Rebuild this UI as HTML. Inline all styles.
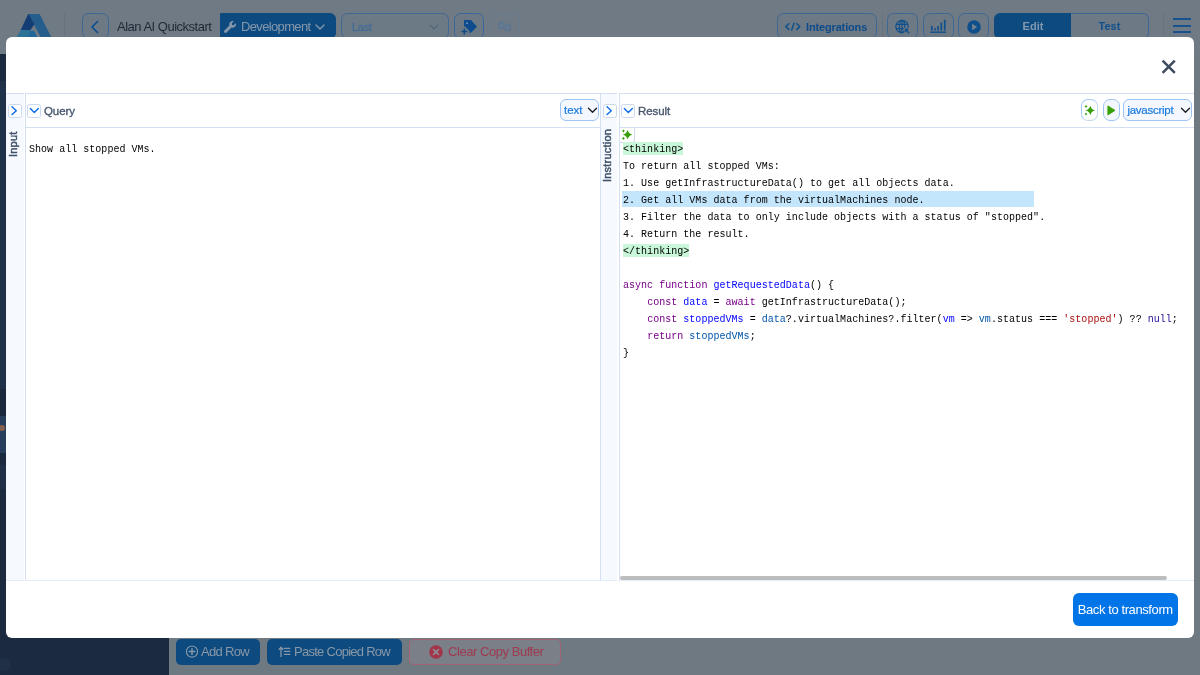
<!DOCTYPE html>
<html lang="en">
<head>
<meta charset="utf-8">
<title>Alan AI Quickstart</title>
<style>
*{box-sizing:border-box;margin:0;padding:0}
html,body{width:1200px;height:675px;overflow:hidden}
body{position:relative;font-family:"Liberation Sans",sans-serif;background:#6e7982;color:#3e4b5c}
.abs{position:absolute}
#modal,#topbar,.bb{will-change:transform}
/* ---------- dimmed background app ---------- */
#topbar{left:0;top:0;width:1200px;height:54px;background:#707a84}
#sidebar{left:0;top:54px;width:169px;height:621px;background:#1b2b40}
#sidebar .band{left:0;width:169px;background:#223349}
#main{left:169px;top:54px;width:1031px;height:621px;background:#6f7982}
.tb{position:absolute;top:13px;height:26px;border:1px solid #3d6896;border-radius:6.500px;background:#6d7a85;color:#0f4f8c;font-size:12px;line-height:24px;white-space:nowrap}
.tb.solid{background:#0c4a80;border-color:#0c4a80;color:#8b9fb3}
.bb{position:absolute;top:639px;height:26px;border-radius:5px;background:#0c4a80;color:#8a97a5;font-size:13px;line-height:26px;white-space:nowrap}
/* ---------- modal ---------- */
#modal{left:6px;top:37px;width:1188px;height:601px;background:#fff;border-radius:6px;overflow:hidden}
.hl{background:#d3e0f3}
.vtext{position:absolute;transform-origin:0 0;transform:rotate(-90deg);font-size:11px;letter-spacing:0.22px;font-weight:normal;-webkit-text-stroke:0.45px #3f5169;color:#3f5169;white-space:nowrap;line-height:14px}
.sq{position:absolute;width:14px;height:14px;border:1px solid #cbd9ef;border-radius:2.5px;background:#fdfeff}
.ptitle{position:absolute;font-size:11.5px;letter-spacing:-0.1px;-webkit-text-stroke:0.35px #46566c;color:#4a5a70;line-height:14px}
.sel{position:absolute;height:22px;border:1px solid #9cc5f5;border-radius:6px;background:#f4f8fe;color:#1a7be0;-webkit-text-stroke:0.200px #1a7be0;font-size:11.5px;line-height:21px;white-space:nowrap}
pre{position:absolute;font-family:"Liberation Mono","DejaVu Sans Mono",monospace;font-size:10px;line-height:17px;color:#000;white-space:pre;letter-spacing:0.03px}
.k{color:#708}.d{color:#00f}.v2{color:#05a}.s{color:#a11}.a{color:#219}
.tg{background:#c9f7d9;padding:1.800px 0 0.200px}
</style>
</head>
<body>

<div id="topbar" class="abs">
  <svg class="abs" style="left:10px;top:8px" width="50" height="32" viewBox="10 8 50 32">
    <polygon points="28.300,13.900 39.600,13.900 52.700,40 42.300,40" fill="#255d8c"/>
    <polygon points="28.200,13.900 28.500,13.900 34.400,24.200 30.400,30.100 20.700,30.100" fill="#143d74"/>
    <polygon points="20.700,30.100 30.600,30.100 26,40 15.400,40" fill="#2b7396"/>
    <polygon points="30.600,30.100 30.900,30.700 34.200,30.700 38.800,40 26,40" fill="#20699a"/>
  </svg>
  <div class="abs" style="left:64px;top:13px;width:1px;height:27px;background:#66727e"></div>
  <div class="tb" style="left:82px;width:27px">
    <svg class="abs" style="left:5.800px;top:5.500px" width="12" height="14" viewBox="0 0 12 14"><path d="M8.5 1.500 L3 7 L8.5 12.500" fill="none" stroke="#0c4c90" stroke-width="1.700" stroke-linecap="round" stroke-linejoin="round"/></svg>
  </div>
  <div class="abs" style="left:117px;top:17.800px;font-size:13px;line-height:18px;color:#1f2935;white-space:nowrap;letter-spacing:-0.5px">Alan AI Quickstart</div>
  <div class="tb solid" style="left:220px;width:116px;border-radius:1px 6px 6px 1px">
    <svg class="abs" style="left:3px;top:7px" width="12" height="12" viewBox="0 0 512 512"><path fill="#8497aa" d="M507.7 109.1c-2.200-9-13.500-12.100-20.100-5.500l-74.400 74.400-67.900-11.300-11.300-67.900 74.400-74.400c6.600-6.600 3.400-17.900-5.700-20.200-47.400-11.700-99.600.9-136.600 37.900-39.600 39.600-50.600 97.100-34.100 147.200L18.700 402.800c-25 25-25 65.500 0 90.500s65.500 25 90.500 0l213.200-213.200c50.100 16.700 107.500 5.700 147.400-34.200 37.100-37.100 49.700-89.300 37.900-136.800z"/></svg>
    <span class="abs" style="left:20px;top:0.5px;font-size:13px;color:#8598ab;letter-spacing:-0.65px">Development</span>
    <svg class="abs" style="left:94px;top:10px" width="10" height="6" viewBox="0 0 10 6"><path d="M1 1 L5 5 L9 1" fill="none" stroke="#8598ab" stroke-width="1.4" stroke-linecap="round" stroke-linejoin="round"/></svg>
  </div>
  <div class="tb" style="left:341px;width:108px;border-color:#3f6894;background:#6c7a85">
    <span class="abs" style="left:10px;top:0.800px;font-size:11px;color:#436b96;-webkit-text-stroke:0.300px #436b96;letter-spacing:-0.35px">Last</span>
    <svg class="abs" style="left:86.500px;top:10px" width="10" height="6" viewBox="0 0 10 6"><path d="M1 1 L5 5 L9 1" fill="none" stroke="#55677a" stroke-width="1.1" stroke-linecap="round" stroke-linejoin="round"/></svg>
  </div>
  <div class="tb" style="left:454px;width:30px;border-color:#3a679b">
    <svg class="abs" style="left:5px;top:5px" width="20" height="17" viewBox="460 19 20 17"><path d="M464 20 H471 L477 26.700 L471 32.700 H469.300 V30.300 H467.700 V28.200 H465.800 V26.500 H464 Z" fill="#0d4b8c"/><rect x="466.300" y="22.500" width="1.500" height="1.500" fill="#8da1b6"/><path d="M464.300 28.600 v5.800 M461.400 31.500 h5.800" stroke="#0d4b8c" stroke-width="1.400" fill="none"/></svg>
  </div>
  <div class="tb" style="left:490px;width:30px;border-color:#6a7e92;background:#6f7a84">
    <svg class="abs" style="left:6px;top:7px" width="16" height="12" viewBox="497 21 16 12"><rect x="498" y="21.700" width="7" height="7" rx="0.800" fill="#5d7691"/><rect x="504.300" y="24" width="6.800" height="7.300" rx="0.800" fill="#5d7691" stroke="#707a84" stroke-width="0.600"/><path d="M501.500 23.800 v2.800 M500.100 25.200 h2.800 M507.700 26.200 v2.800 M506.300 27.600 h2.800" stroke="#75818d" stroke-width="0.900"/></svg>
  </div>
  <div class="tb" style="left:777px;width:100px;border-color:#3d6896">
    <svg class="abs" style="left:6px;top:8px" width="17" height="10" viewBox="784 22 17 10"><path d="M788.800 23.800 L785.800 26.600 L788.800 29.400 M796.800 23.800 L799.800 26.600 L796.800 29.400 M794 23.200 L791.700 30" fill="none" stroke="#0f4f8c" stroke-width="1.500" stroke-linecap="round" stroke-linejoin="round"/></svg>
    <span class="abs" style="left:28px;top:0.500px;font-size:11px;font-weight:bold;color:#0d4a8a;letter-spacing:-0.15px">Integrations</span>
  </div>
  <div class="abs" style="left:882px;top:13px;width:1px;height:27px;background:#66727e"></div>
  <div class="tb" style="left:887px;width:31px;border-color:#3d6896">
    <svg class="abs" style="left:6px;top:4px" width="18" height="17" viewBox="894 18 18 17"><g fill="none" stroke="#0f4f8c" stroke-width="1.200"><circle cx="902" cy="26.500" r="6.200"/><ellipse cx="902" cy="26.500" rx="2.700" ry="6.200"/><path d="M896 24.300 h12 M896 28.700 h12 M902 20.300 v12.400"/></g><rect x="903.800" y="27.800" width="6.500" height="6.500" fill="#6f7a84"/><path d="M905.300 29.300 h3 M905.300 29.300 v3 M905.600 29.600 l3.600 3.600" stroke="#0f4f8c" stroke-width="1.400" fill="none"/></svg>
  </div>
  <div class="tb" style="left:923px;width:31px;border-color:#3d6896">
    <svg class="abs" style="left:4px;top:4px" width="20" height="17" viewBox="928 18 20 17"><g fill="#0f4f8c"><rect x="931" y="26" width="1.700" height="4.500"/><rect x="934.300" y="28" width="1.500" height="2.500"/><rect x="937.200" y="26" width="1.600" height="4.500"/><rect x="940.500" y="22.500" width="1.600" height="8"/><rect x="943.900" y="19.800" width="1.700" height="10.700"/><rect x="930.200" y="31.500" width="15.800" height="1.400"/></g></svg>
  </div>
  <div class="tb" style="left:958px;width:31px;border-color:#3d6896">
    <svg class="abs" style="left:6.500px;top:4.500px" width="16" height="16" viewBox="965.500 18.500 16 16"><circle cx="973.500" cy="26.500" r="6.800" fill="#0f4f8c"/><path d="M971.600 23.300 L976.700 26.500 L971.600 29.700 z" fill="#76828e"/></svg>
  </div>
  <div class="tb solid" style="left:994px;width:78px;border-radius:6px 0 0 6px;text-align:center;font-weight:bold;font-size:11px;line-height:25.600px;color:#8399b0">Edit</div>
  <div class="tb" style="left:1071px;width:78px;border-radius:0 6px 6px 0;text-align:center;font-weight:bold;font-size:11px;line-height:25.600px;border-color:#3d6896;border-left:none">Test</div>
  <div class="abs" style="left:1163px;top:13px;width:1px;height:27px;background:#66727e"></div>
  <div class="abs" style="left:1173px;top:18px;width:18px;height:2px;background:#17528f"></div>
  <div class="abs" style="left:1173px;top:25px;width:18px;height:2px;background:#17528f"></div>
  <div class="abs" style="left:1173px;top:31px;width:18px;height:2px;background:#17528f"></div>
</div>
<div id="sidebar" class="abs">
  <div class="abs" style="left:0;top:0;width:169px;height:27px;background:#1b2a3f"></div>
  <div class="abs" style="left:0;top:27px;width:169px;height:308px;background:#20324a"></div>
  <div class="abs" style="left:0;top:335px;width:169px;height:27px;background:#1a293d"></div>
  <div class="abs" style="left:0;top:362px;width:169px;height:37px;background:#263e5b"></div>
  <div class="abs" style="left:-1px;top:371px;width:6px;height:6px;border-radius:50%;background:#84604f"></div>
  <div class="abs" style="left:0;top:399px;width:169px;height:222px;background:#1b2a3f"></div>
  <div class="abs" style="left:0;top:411px;width:169px;height:24px;background:#1e2f46"></div>
  <div class="abs" style="left:-2px;top:604px;width:13px;height:13px;border-radius:50%;background:#1f3047"></div>
</div>
<div id="main" class="abs"></div>
<div class="bb" style="left:176px;width:84px">
  <svg class="abs" style="left:9px;top:5px" width="15" height="15" viewBox="185 644 15 15"><circle cx="192" cy="651.600" r="5.600" fill="none" stroke="#8596a8" stroke-width="1.200"/><path d="M192 648.200 v6.800 M188.600 651.600 h6.800" stroke="#8596a8" stroke-width="1.500" fill="none"/></svg>
  <span class="abs" style="left:25px;top:-0.400px;letter-spacing:-0.7px">Add Row</span>
</div>
<div class="bb" style="left:267px;width:135px">
  <svg class="abs" style="left:11px;top:7px" width="14" height="12" viewBox="0 0 14 12"><path d="M3 11 V1.500 M0.800 3.800 L3 1.300 L5.200 3.800 M5.800 2.300 h6.500 M5.800 5.300 h6.500 M5.800 8.300 h6.500" stroke="#8596a8" stroke-width="1.300" fill="none"/></svg>
  <span class="abs" style="left:27px;top:-0.400px;letter-spacing:-0.73px">Paste Copied Row</span>
</div>
<div class="bb" style="left:408.500px;width:152px;background:#7a7f88;border:1px solid #a26575;color:#a03a50;line-height:24px">
  <svg class="abs" style="left:19px;top:5px" width="14" height="14" viewBox="0 0 14 14"><circle cx="7" cy="7" r="6.800" fill="#a3344a"/><path d="M4.600 4.600 l4.800 4.800 M9.400 4.600 l-4.800 4.800" stroke="#8a8f98" stroke-width="1.600" fill="none" stroke-linecap="round"/></svg>
  <span class="abs" style="left:38px;top:-0.400px;letter-spacing:-0.45px">Clear Copy Buffer</span>
</div>

<!-- modal -->
<div id="modal" class="abs">
  <!-- close -->
  <svg class="abs" style="left:1154px;top:21px" width="18" height="18" viewBox="1160 58 18 18"><path d="M1162.600 60.700 L1174.800 72.900 M1174.800 60.700 L1162.600 72.900" stroke="#3d4b5e" stroke-width="2.500" fill="none"/></svg>

  <!-- Input column -->
  <div class="abs" style="left:0;top:56px;width:18px;height:488px;background:#f6f9fe;border-top:1px solid #d3e0f3;border-bottom:1px solid #e3ebf7"></div>
  <div class="sq" style="left:2.300px;top:67px"><svg class="abs" style="left:-1px;top:-1px" width="14" height="14" viewBox="0 0 14 14"><path d="M4 2.800 L8.300 6.700 L4 10.600" fill="none" stroke="#0b6ce6" stroke-width="1.400" stroke-linecap="round" stroke-linejoin="round"/></svg></div>
  <div class="vtext" style="left:0px;top:120px">Input</div>

  <!-- Query panel -->
  <div class="abs" style="left:18.500px;top:56px;width:577.500px;height:488px;border:1px solid #d3e0f3;border-right:none;border-bottom-color:#e3ebf7"></div>
  <div class="abs" style="left:19px;top:90px;width:576px;height:1px;background:#d3e0f3"></div>
  <div class="sq" style="left:21px;top:67px"><svg class="abs" style="left:-1px;top:-1px" width="14" height="14" viewBox="0 0 14 14"><path d="M3.300 4.400 L7.300 8.400 L11.300 4.400" fill="none" stroke="#0b6ce6" stroke-width="1.400" stroke-linecap="round" stroke-linejoin="round"/></svg></div>
  <div class="ptitle" style="left:38px;top:66.500px">Query</div>
  <div class="sel" style="left:554px;top:62px;width:39px"><span class="abs" style="left:3px;top:0">text</span>
    <svg class="abs" style="left:26px;top:7px" width="11" height="7" viewBox="0 0 11 7"><path d="M1.500 1.300 L5.500 5.200 L9.500 1.300" fill="none" stroke="#1b1f24" stroke-width="1.400" stroke-linecap="round" stroke-linejoin="round"/></svg></div>
  <pre style="left:23px;top:104px">Show all stopped VMs.</pre>

  <!-- Instruction column -->
  <div class="abs" style="left:594px;top:56px;width:17px;height:488px;background:#f6f9fe;border-top:1px solid #d3e0f3;border-left:1px solid #d3e0f3;border-bottom:1px solid #e3ebf7"></div>
  <div class="sq" style="left:597px;top:67px"><svg class="abs" style="left:-1px;top:-1px" width="14" height="14" viewBox="0 0 14 14"><path d="M4 2.800 L8.300 6.700 L4 10.600" fill="none" stroke="#0b6ce6" stroke-width="1.400" stroke-linecap="round" stroke-linejoin="round"/></svg></div>
  <div class="vtext" style="left:594px;top:145px">Instruction</div>

  <!-- Result panel -->
  <div class="abs" style="left:613px;top:56px;width:575px;height:488px;border:1px solid #d3e0f3;border-right:none;border-bottom-color:#e3ebf7"></div>
  <div class="abs" style="left:613px;top:90px;width:575px;height:1px;background:#d3e0f3"></div>
  <div class="sq" style="left:615px;top:67px"><svg class="abs" style="left:-1px;top:-1px" width="14" height="14" viewBox="0 0 14 14"><path d="M3.300 4.400 L7.300 8.400 L11.300 4.400" fill="none" stroke="#0b6ce6" stroke-width="1.400" stroke-linecap="round" stroke-linejoin="round"/></svg></div>
  <div class="ptitle" style="left:632px;top:66.500px">Result</div>
  <div class="sel" style="left:1075.200px;top:62px;width:17.300px;background:#fff;border-color:#a6ccf6 #c9d9ec #c9d9ec #a6ccf6;border-radius:7px"><svg class="abs" style="left:-1px;top:-1px" width="18" height="22" viewBox="1081.200 99 18 22"><path fill="#37a008" d="M1090.5 105.6 Q1091.3 109.6 1095.3 110.4 Q1091.3 111.2 1090.5 115.2 Q1089.7 111.2 1085.7 110.4 Q1089.7 109.6 1090.5 105.6Z M1086.2 104.65 Q1086.55 106.05 1087.95 106.4 Q1086.55 106.75 1086.2 108.15 Q1085.85 106.75 1084.45 106.4 Q1085.85 106.05 1086.2 104.65Z M1086.2 112.4 Q1086.55 113.75 1087.9 114.1 Q1086.55 114.45 1086.2 115.8 Q1085.85 114.45 1084.5 114.1 Q1085.85 113.75 1086.2 112.4Z"/></svg></div>
  <div class="sel" style="left:1097px;top:62px;width:17px;border-radius:7px"><svg class="abs" style="left:-1px;top:-1px" width="17" height="22" viewBox="1103 99 17 22"><path d="M1107.900 105.900 L1115 110.400 L1107.900 114.900 Z" fill="#37a008" stroke="#37a008" stroke-width="0.900" stroke-linejoin="round"/></svg></div>
  <div class="sel" style="left:1117px;top:62px;width:69px"><span class="abs" style="left:3.400px;top:0;letter-spacing:-0.26px">javascript</span>
    <svg class="abs" style="left:56px;top:7px" width="11" height="7" viewBox="0 0 11 7"><path d="M1.500 1.300 L5.500 5.200 L9.500 1.300" fill="none" stroke="#1b1f24" stroke-width="1.400" stroke-linecap="round" stroke-linejoin="round"/></svg></div>

  <!-- sparkle gutter widget -->
  <div class="abs" style="left:614px;top:91px;width:15px;height:14.500px;border-right:1px solid #cfdcf0;border-bottom:1px solid #cfdcf0;border-radius:0 0 3px 0;background:#fff"><svg class="abs" style="left:0;top:0" width="14" height="14" viewBox="620 128 14 14"><path fill="#37a008" d="M627.6 129.8 Q628.4 133.9 632.5 134.7 Q628.4 135.5 627.6 139.6 Q626.8 135.5 622.7 134.7 Q626.8 133.9 627.6 129.8Z M623.4 129.15 Q623.75 130.55 625.15 130.9 Q623.75 131.25 623.4 132.65 Q623.05 131.25 621.65 130.9 Q623.05 130.55 623.4 129.15Z M623.4 136.7 Q623.75 138.05 625.1 138.4 Q623.75 138.75 623.4 140.1 Q623.05 138.75 621.7 138.4 Q623.05 138.05 623.4 136.7Z"/></svg>
  </div>

  <!-- code -->
  <div class="abs" style="left:616px;top:154px;width:412px;height:16px;background:#c4e6fd"></div>
  <pre style="left:617px;top:104px"><span class="tg">&lt;thinking&gt;</span>
To return all stopped VMs:
1. Use getInfrastructureData() to get all objects data.
2. Get all VMs data from the virtualMachines node.
3. Filter the data to only include objects with a status of "stopped".
4. Return the result.
<span class="tg">&lt;/thinking&gt;</span>

<span class="k">async</span> <span class="k">function</span> <span class="d">getRequestedData</span>() {
    <span class="k">const</span> <span class="d">data</span> = <span class="k">await</span> getInfrastructureData();
    <span class="k">const</span> <span class="d">stoppedVMs</span> = <span class="v2">data</span>?.virtualMachines?.filter(<span class="d">vm</span> =&gt; <span class="v2">vm</span>.status === <span class="s">'stopped'</span>) ?? <span class="a">null</span>;
    <span class="k">return</span> <span class="v2">stoppedVMs</span>;
}</pre>

  <!-- scrollbar -->
  <div class="abs" style="left:614px;top:538.600px;width:547px;height:4.700px;background:#bdbdbd;border-radius:3px"></div>

  <!-- footer button -->
  <div class="abs" style="left:1067px;top:555.700px;width:104.500px;height:33.800px;background:#0175e8;border-radius:6px;color:#fff;font-size:13px;line-height:33.800px;text-align:center;white-space:nowrap;letter-spacing:-0.4px">Back to transform</div>
</div>
</body>
</html>
